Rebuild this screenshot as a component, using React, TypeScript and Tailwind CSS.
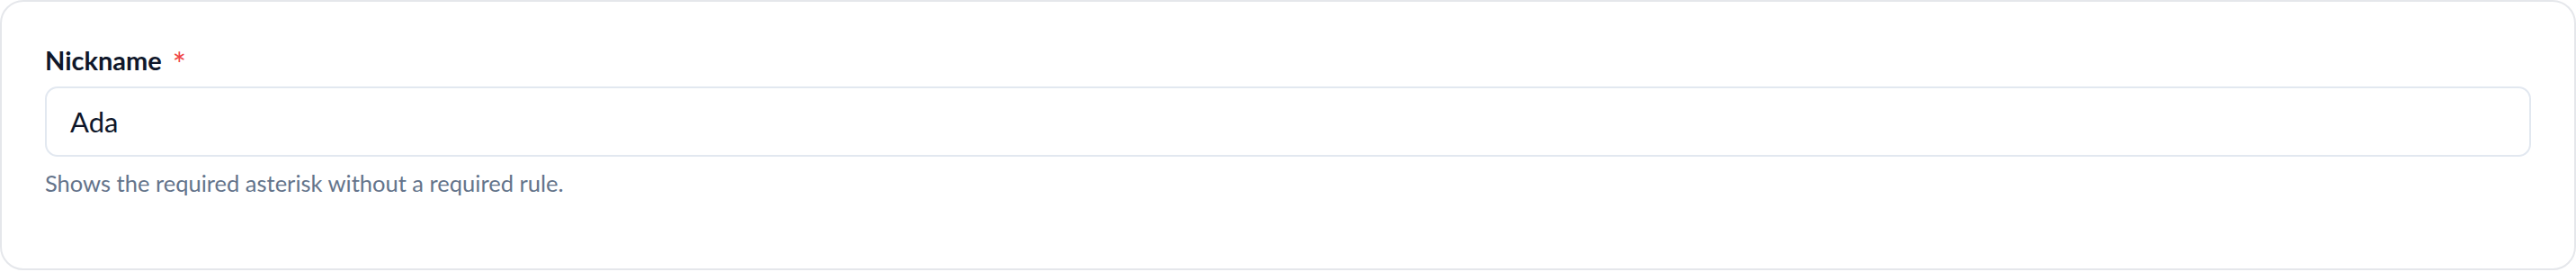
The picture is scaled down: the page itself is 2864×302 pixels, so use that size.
import React from "react";

export default function App() {
  return (
    <div className="w-[2864px] h-[302px] bg-white" style={{ fontFamily: "Lato, 'Noto Sans', sans-serif" }}>
      <div className="h-[300px] rounded-[26px] border-2 border-[#e5e7eb] bg-white px-[48px] pt-[47px]">
        <div className="flex items-start gap-[12px] h-[36px] leading-[36px]">
          <span className="text-[29px] font-bold text-[#0f172a]">Nickname</span>
          <span className="text-[36px] leading-[44px] text-[#ef4444]">*</span>
        </div>
        <div className="mt-[11px] h-[78px] w-[2764px] rounded-[14px] border-2 border-[#e2e8f0] bg-white flex items-center px-[26px]">
          <span className="text-[31px] text-[#0f172a]">Ada</span>
        </div>
        <div className="mt-[12px] text-[25.5px] leading-[34px] text-[#64748b]">
          Shows the required asterisk without a required rule.
        </div>
      </div>
    </div>
  );
}
